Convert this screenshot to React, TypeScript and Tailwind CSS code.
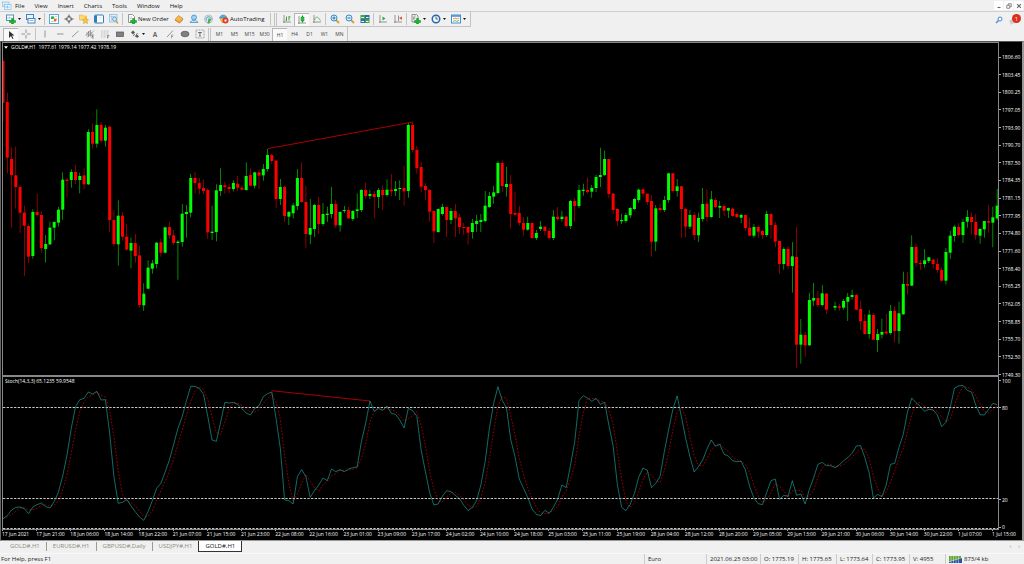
import type { ReactNode } from "react";
import clsx from "clsx";

// Chart space is drawn at 3 units per pixel
const BAR_STEP = 12.8;
const FIRST_BAR = 9;
const barX = (i: number) => FIRST_BAR + i * BAR_STEP;

// direction, high, body top, body bottom, low - one entry per hourly bar
const BAR_GROUPS = [
  {
    base: 150,
    bars: `d 25 33 158 215|d 128 156 323 370|d 293 327 375 533|d 290 376 411 476|d 405 411 488 548|d 467 488 527 678|d 520 528 620 638|u 478 486 618 626|d 431 486 495 500|d 484 495 594 608|u 555 582 597 638|u 515 533 583 585|u 514 516 533 571|u 471 479 518 530|u 367 389 479 509|d 384 389 393 443|u 358 366 390 413|d 345 366 390 403|u 368 378 390 430|d 354 376 403 418|u 238 246 403 405|d 221 246 281 296|u 178 225 281 293|d 216 225 272 278|u 225 233 272 290|d 228 230 510 545|d 480 510 582 590|u 451 497 583 647|d 486 497 560 572|d 522 560 599 602|u 562 579 602 655|d 552 579 618 638|d 588 616 765 773|u 700 731 766 783|u 631 653 716 718|u 630 640 656 671|u 576 578 642 655|d 566 577 608 620|u 530 532 608 610|d 515 531 556 567|d 540 556 579 586|u 570 575 579 689|u 462 491 576 590|u 465 486 492 563|u 372 384 488 502|d 366 384 399 430|d 384 399 416 433|d 388 414 423 432|d 415 420 547 567|u 467 545 549 570|u 403 421 546 574|u 355 405 423 438|d 395 406 411 431|d 403 411 417 430|u 391 399 417 424|d 378 401 413 423|d 405 413 419 421|u 337 378 420 422|d 355 375 407 410|u 366 367 407 415`,
  },
  {
    base: 300,
    bars: `d 208 217 227 267|u 192 207 226 242|u 147 165 207 215|d 162 165 183 192|d 180 182 297 325|u 237 261 297 315|d 258 261 348 365|u 333 336 350 375|u 309 316 340 355|u 207 234 318 330|d 187 234 306 308|d 258 306 402 443|u 297 384 404 432|u 312 315 387 411|d 291 315 372 402|u 309 342 372 378|u 320 341 345 366|u 261 312 342 355|d 300 312 376 384|u 333 336 376 395|u 318 330 333 339|d 321 330 355 358|u 330 333 357 363|u 280 328 333 354|u 267 270 330 336|d 248 270 288 296|u 270 282 288 297|d 273 282 291 355|u 264 270 291 324|d 256 270 285 330|u 238 269 285 290|d 222 269 274 288|u 243 267 273 288|u 241 264 267 300|d 197 264 274 317|u 69 75 273 293|d 67 75 150 158|d 138 150 204 221|d 187 201 260 276|d 249 258 270 300|d 267 270 335 365|d 333 333 394 429|u 325 327 396 398|u 312 321 342 347|d 320 321 360 411|u 324 333 360 372|d 312 333 355 411|d 342 352 381 402|d 369 381 384 404|d 380 381 398 434|u 357 369 396 416|u 345 363 372 395|u 342 360 366 396|u 273 317 363 367|u 276 288 321 324|u 258 277 290 311|u 183 189 279 282|d 181 189 258 276|u 201 252 261 290`,
  },
  {
    base: 360,
    bars: `d 165 192 282 325|d 215 279 284 286|d 258 279 309 317|d 291 309 329 347|u 290 309 329 332|d 307 309 354 357|u 330 339 354 360|u 303 320 327 333|d 318 320 333 346|d 324 333 354 359|u 270 290 354 360|d 261 290 297 303|u 273 290 297 305|d 288 290 318 324|u 240 243 318 327|d 234 243 258 305|u 195 210 258 264|u 191 209 213 227|d 172 210 216 221|u 195 204 215 233|u 164 171 204 216|u 83 165 171 201|u 92 117 165 168|d 117 117 222 234|d 219 221 270 282|d 265 267 303 318|u 281 300 304 312|u 278 285 303 309|u 261 264 286 294|u 234 237 267 270|u 206 209 240 248|d 207 208 221 231|d 221 221 246 255|d 225 243 365 410|u 255 265 365 393|d 251 264 270 278|u 228 240 270 276|u 158 160 240 248|d 159 160 213 218|u 177 199 213 230|d 198 199 267 354|d 262 267 320 351|u 270 285 320 327|d 276 285 345 360|u 278 294 346 366|u 204 252 297 305|d 209 251 291 305|u 213 238 291 293|d 234 240 261 264|u 243 258 263 294|d 252 258 272 288|u 263 264 272 294|d 262 266 288 291|d 277 282 291 294|u 281 285 293 309`,
  },
  {
    base: 510,
    bars: `d 134 135 174 182|d 142 173 197 199|u 162 171 197 203|d 165 171 185 203|d 180 183 195 207|u 122 132 195 200|d 130 132 165 207|d 156 165 215 231|d 213 213 282 311|u 232 237 282 299|d 228 237 288 297|u 216 259 288 368|d 171 261 524 593|u 447 494 524 581|d 486 495 526 560|u 369 390 526 527|u 339 384 392 408|d 363 384 405 412|u 345 370 405 409|d 369 371 419 432|-|u 395 408 413 422|d 402 409 413 422|u 387 393 413 419|u 369 381 395 453|u 359 375 381 389|d 372 375 419 421|d 393 417 454 479|d 432 453 492 494|u 420 434 492 506|d 429 435 509 511|u 477 492 510 546|u 446 486 494 505|d 432 485 490 495|u 405 423 489 494|d 409 423 483 518|u 395 430 483 521|u 305 342 433 434|d 305 342 347 374|u 196 231 347 348|d 221 231 279 290|d 270 279 282 300|u 237 271 282 293|u 261 262 273 279|d 267 269 282 296|d 265 282 300 309|d 292 300 332 334|u 234 246 332 344|u 183 197 248 267|u 166 170 198 215|d 159 171 195 200|u 146 156 195 219|u 120 141 155 173|d 128 141 156 194|d 132 156 195 209|u 174 177 197 221|u 153 153 178 203|d 105 153 158 188|u 110 142 158 232|u 57 107 145 150`,
  },
];

const CANDLES = BAR_GROUPS.flatMap(({ base, bars }) =>
  bars.split("|").map((bar) => {
    if (bar === "-") return null;
    const [dir, ...values] = bar.split(" ");
    const [high, top, bottom, low] = values.map((v) => Number(v) + base);
    return { up: dir === "u", high, top, bottom, low };
  })
);

const STOCH_MAIN = [
  446, 437, 420, 412, 411, 416, 431, 411, 404, 399, 410, 414, 395, 366, 318, 255, 175, 110, 89, 85,
  66, 72, 64, 90, 89, 190, 320, 400, 397, 388, 408, 425, 441, 451, 425, 392, 355, 340, 306, 270,
  223, 175, 140, 92, 49, 49, 55, 73, 140, 210, 214, 157, 97, 99, 97, 103, 116, 129, 135, 115,
  107, 80, 71, 66, 146, 235, 390, 392, 402, 320, 299, 320, 382, 362, 345, 324, 332, 297, 305, 299,
  305, 297, 293, 291, 215, 160, 93, 124, 115, 121, 108, 130, 133, 150, 174, 115, 122, 139, 240, 305,
  368, 405, 402, 378, 362, 365, 376, 386, 406, 422, 412, 392, 345, 275, 175, 100, 50, 91, 113, 209,
  260, 327, 355, 383, 417, 433, 437, 421, 430, 412, 387, 345, 353, 286, 215, 92, 77, 84, 94, 85,
  103, 97, 165, 228, 345, 412, 422, 403, 370, 322, 294, 301, 353, 340, 319, 245, 180, 118, 78, 140,
  205, 260, 306, 290, 270, 237, 210, 229, 223, 253, 258, 272, 275, 274, 300, 350, 384, 401, 404, 367,
  332, 327, 388, 376, 379, 332, 376, 372, 402, 358, 323, 283, 277, 287, 287, 293, 285, 272, 263, 250,
  228, 227, 263, 308, 384, 373, 380, 345, 283, 280, 232, 193, 125, 84, 98, 109, 124, 118, 120, 135,
  170, 157, 113, 54, 48, 46, 61, 66, 106, 134, 135, 118, 100, 104,
];

// Signal line is the 3 bar average of the main line
const STOCH_SIGNAL = STOCH_MAIN.map((_, i) => {
  const slice = STOCH_MAIN.slice(Math.max(0, i - 2), i + 1);
  return slice.reduce((sum, v) => sum + v, 0) / slice.length;
});

const toPoints = (values: number[]) => values.map((v, i) => `${barX(i)},${v}`).join(" ");

const PRICES = [
  "1806.60", "1803.45", "1800.25", "1797.05", "1793.90", "1790.70", "1787.50", "1784.35", "1781.15", "1777.95",
  "1774.80", "1771.60", "1768.40", "1765.25", "1762.05", "1758.85", "1755.70", "1752.50", "1749.30",
];

const TIMES = [
  "17 Jun 2021", "17 Jun 21:00", "18 Jun 06:00", "18 Jun 14:00", "18 Jun 22:00", "21 Jun 07:00",
  "21 Jun 15:00", "21 Jun 23:00", "22 Jun 08:00", "22 Jun 16:00", "23 Jun 01:00", "23 Jun 09:00",
  "23 Jun 17:00", "24 Jun 02:00", "24 Jun 10:00", "24 Jun 18:00", "25 Jun 03:00", "25 Jun 11:00",
  "25 Jun 19:00", "28 Jun 04:00", "28 Jun 12:00", "28 Jun 20:00", "29 Jun 05:00", "29 Jun 13:00",
  "29 Jun 21:00", "30 Jun 06:00", "30 Jun 14:00", "30 Jun 22:00", "1 Jul 07:00",
];

const MENUS = ["File", "View", "Insert", "Charts", "Tools", "Window", "Help"];
const TIMEFRAMES = ["M1", "M5", "M15", "M30", "H1", "H4", "D1", "W1", "MN"];
const TABS = ["GOLD#,H1", "EURUSD#,H1", "GBPUSD#,Daily", "USDJPY#,H1"];

function Icon({ children }: { children: ReactNode }) {
  return (
    <svg viewBox="0 0 20 20" className="h-[10px] w-[10px] shrink-0" fill="none" aria-hidden="true">
      {children}
    </svg>
  );
}

interface ToolButtonProps {
  label: string;
  active?: boolean;
  dropdown?: boolean;
  children: ReactNode;
}

function ToolButton({ label, active, dropdown, children }: ToolButtonProps) {
  return (
    <button
      aria-label={label}
      className={clsx(
        "flex h-[13px] shrink-0 items-center justify-center",
        dropdown ? "w-[20px] gap-[2px]" : "w-[15px]",
        active && "border-l border-t border-[#b5b5b5] bg-[#f9f9f9]"
      )}
    >
      {children}
      {dropdown && (
        <svg viewBox="0 0 6 4" className="h-[2px] w-[3px] shrink-0" aria-hidden="true">
          <path d="M0 0h6L3 4z" fill="#111" />
        </svg>
      )}
    </button>
  );
}

const Divider = () => <span className="mx-[1px] h-[12px] w-px shrink-0 bg-[#c3c3c3]" />;

const GreenPlus = () => <path d="M11 9h4v4h4v4h-4v3h-4v-3H7v-4h4z" fill="#19b52b" stroke="#0b8a19" />;

function MenuBar() {
  return (
    <header className="flex h-[12px] items-center border-b border-[#cfcfcf] text-[6px] leading-[10px] text-[#111]">
      <span className="mx-[2px]">
        <Icon>
          <rect x="1" y="2" width="13" height="9" fill="#d9efff" stroke="#58a8dc" />
          <rect x="5" y="7" width="13" height="10" fill="#eef8ff" stroke="#58a8dc" />
          <path d="M8 14v-4m3 5V9m3 5v-3" stroke="#3c8ec8" />
        </Icon>
      </span>
      <nav className="flex gap-[10px] pl-px">
        {MENUS.map((menu) => (
          <button key={menu}>{menu}</button>
        ))}
      </nav>
      <div className="ml-auto flex gap-[1px] pr-px">
        {["Minimize", "Restore", "Close"].map((name) => (
          <button key={name} aria-label={name} className="flex h-[9px] w-[9px] items-center justify-center bg-white">
            <svg viewBox="0 0 8 8" className="h-[6px] w-[6px]" fill="none" stroke="#666" aria-hidden="true">
              {name === "Minimize" && <path d="M2 6h4" strokeWidth="1.5" />}
              {name === "Restore" && <path d="M1 3h4v4H1zM3 3V1h4v4H5" />}
              {name === "Close" && <path d="M1.5 1.5l5 5m0-5l-5 5" strokeWidth="1.5" />}
            </svg>
          </button>
        ))}
      </div>
    </header>
  );
}

function MainToolbar() {
  return (
    <div className="flex h-[15px] items-center">
      <div className="flex h-[15px] items-center border-b border-r border-[#c3c3c3] pl-[3px] pr-[2px]">
        <ToolButton label="New chart" dropdown>
          <Icon>
            <rect x="1" y="2" width="14" height="11" fill="#fff" stroke="#4e94bd" strokeWidth="2" />
            <path d="M4 10V6m3 4V5m3 4V6" stroke="#4e94bd" />
            <GreenPlus />
          </Icon>
        </ToolButton>
        <ToolButton label="Profiles" dropdown>
          <Icon>
            <rect x="1" y="1" width="14" height="10" fill="#e7f3fb" stroke="#3f88c5" strokeWidth="2" />
            <rect x="4" y="9" width="14" height="9" fill="#fff" stroke="#3f88c5" strokeWidth="2" />
            <path d="M7 13h8" stroke="#8bb9dd" strokeWidth="2" />
          </Icon>
        </ToolButton>
        <Divider />
        <ToolButton label="Market Watch">
          <Icon>
            <rect x="1" y="1" width="18" height="18" fill="#fff" stroke="#62a6d2" strokeWidth="2" />
            <path d="M4 9l4-5 4 5z" fill="#28b03c" />
            <path d="M4 5h5v5H4z" fill="#28b03c" />
            <path d="M10 10l6-1-2 6h-5z" fill="#f0632f" />
            <path d="M12 5h4M4 15h4" stroke="#b9d3e4" strokeWidth="2" />
          </Icon>
        </ToolButton>
        <ToolButton label="Data Window">
          <Icon>
            <circle cx="10" cy="10" r="5" stroke="#555" strokeWidth="1.5" />
            <path d="M10 1v7m0 4v7M1 10h7m4 0h7" stroke="#555" strokeWidth="2" />
          </Icon>
        </ToolButton>
        <ToolButton label="Navigator">
          <Icon>
            <path d="M1 2h6l2 2h6v8H1z" fill="#ffda70" stroke="#d8a02d" />
            <path d="M13 7l2 4 4 .5-3 3 1 4.5-4-2-4 2 1-4.5-3-3 4-.5z" fill="#ffc93c" stroke="#c98c1b" />
          </Icon>
        </ToolButton>
        <ToolButton label="Terminal">
          <Icon>
            <rect x="1" y="2" width="18" height="16" rx="2" fill="#fff" stroke="#2f7dbb" strokeWidth="2" />
            <path d="M2 3h4v14H2z" fill="#2f7dbb" />
            <path d="M9 7h7m-7 3h7" stroke="#c7dff0" />
          </Icon>
        </ToolButton>
        <ToolButton label="Strategy Tester">
          <Icon>
            <rect x="1" y="1" width="15" height="15" fill="#e4f1fa" stroke="#87b7d6" strokeWidth="1.5" />
            <path d="M3 5h10M5 3v11" stroke="#87b7d6" />
            <circle cx="11" cy="10" r="4" fill="#cfe9fb" stroke="#4a8ebb" strokeWidth="1.5" />
            <path d="M14 14l4 5" stroke="#dba436" strokeWidth="3" />
          </Icon>
        </ToolButton>
        <Divider />
        <button className="flex h-[13px] w-[47px] items-center gap-[1px] pl-[3px] text-[6px] text-[#111]">
          <Icon>
            <path d="M3 1h8l4 4v12H3z" fill="#fff" stroke="#777" strokeWidth="1.5" />
            <path d="M5 6h5M5 9h5" stroke="#999" />
            <GreenPlus />
          </Icon>
          <span className="whitespace-nowrap">New Order</span>
        </button>
        <ToolButton label="MetaEditor">
          <Icon>
            <path d="M2 11l7-8 9 6-7 8z" fill="#f5b64b" stroke="#b76b16" />
            <path d="M2 11l9 6 7-8v3l-7 7-9-6z" fill="#cb7d22" />
          </Icon>
        </ToolButton>
        <ToolButton label="Market">
          <Icon>
            <circle cx="10" cy="7" r="5" fill="#9fd0f2" stroke="#3f8bc4" strokeWidth="1.5" />
            <path d="M2 17c0-5 16-5 16 0z" fill="#d7ebf9" stroke="#3f8bc4" strokeWidth="1.5" />
          </Icon>
        </ToolButton>
        <ToolButton label="Signals">
          <Icon>
            <circle cx="9" cy="10" r="8" fill="#e1e8ec" stroke="#a3b1ba" strokeWidth="1.5" />
            <path d="M5 13a5 5 0 119-1" stroke="#5198c6" strokeWidth="2" />
            <path d="M9 8l5 3-3 8H7z" fill="#44b34c" />
          </Icon>
        </ToolButton>
        <button className="flex h-[13px] w-[53px] items-center gap-[1px] pl-[3px] text-[6px] text-[#111]">
          <Icon>
            <path d="M1 8c2-8 13-8 15 0z" fill="#5fa9d8" stroke="#2f74a5" />
            <path d="M2 9h13l-3 8H6z" fill="#f3c34d" stroke="#bb8220" />
            <circle cx="13" cy="13" r="6" fill="#e03a22" />
            <path d="M11 11h4v4h-4z" fill="#fff" />
          </Icon>
          <span className="whitespace-nowrap">AutoTrading</span>
        </button>
        <Divider />
        <span className="mx-[2px] h-[13px] w-[3px] border-x border-[#c3c3c3]" />
        <ToolButton label="Bar chart">
          <Icon>
            <path d="M4 2v16M2 16h16" stroke="#777" strokeWidth="1.5" />
            <path d="M9 5v9M7 12h2m5-8v9m0-7h3" stroke="#43a04a" strokeWidth="2" />
          </Icon>
        </ToolButton>
        <ToolButton label="Candlesticks" active>
          <Icon>
            <path d="M4 2v16M2 16h16" stroke="#777" strokeWidth="1.5" />
            <path d="M11 1v14" stroke="#118b25" strokeWidth="2" />
            <path d="M8 4h6v8H8z" fill="#20c638" stroke="#118b25" />
          </Icon>
        </ToolButton>
        <ToolButton label="Line chart">
          <Icon>
            <path d="M4 2v16M2 16h16" stroke="#777" strokeWidth="1.5" />
            <path d="M5 12c3-8 6-8 12 1" stroke="#43a04a" strokeWidth="1.5" />
          </Icon>
        </ToolButton>
        <Divider />
        {["Zoom in", "Zoom out"].map((name) => (
          <ToolButton key={name} label={name}>
            <Icon>
              <path d="M12 12l6 6" stroke="#d9a134" strokeWidth="4" />
              <circle cx="8" cy="8" r="6" fill="#d9effc" stroke="#348bc9" strokeWidth="2" />
              <path d="M5 8h6" stroke="#246fa8" strokeWidth="2" />
              {name === "Zoom in" && <path d="M8 5v6" stroke="#246fa8" strokeWidth="2" />}
            </Icon>
          </ToolButton>
        ))}
        <ToolButton label="Tile windows">
          <Icon>
            <path d="M1 2h9v8H1zM10 10h9v8h-9z" fill="#43a536" />
            <path d="M10 2h9v8h-9zM1 10h9v8H1z" fill="#276fbd" />
            <path d="M3 6h5v2H3zm9 0h5v2h-5zM3 14h5v2H3zm9 0h5v2h-5z" fill="#fff" />
          </Icon>
        </ToolButton>
        <Divider />
        <ToolButton label="Auto scroll">
          <Icon>
            <path d="M4 2v16M2 16h16" stroke="#777" strokeWidth="1.5" />
            <path d="M9 5l6 4-6 4z" fill="#2daa3e" />
          </Icon>
        </ToolButton>
        <ToolButton label="Chart shift">
          <Icon>
            <path d="M4 2v16M2 16h16M11 3v11" stroke="#777" strokeWidth="1.5" />
            <path d="M18 5v7l-6-4z" fill="#d65a35" />
          </Icon>
        </ToolButton>
        <Divider />
        <ToolButton label="Indicators" dropdown>
          <Icon>
            <path d="M2 1h9l3 3v12H2z" fill="#eee" stroke="#777" strokeWidth="1.5" />
            <path d="M5 12c1-9 2-9 4-8M4 8h5" stroke="#555" />
            <GreenPlus />
          </Icon>
        </ToolButton>
        <ToolButton label="Periods" dropdown>
          <Icon>
            <circle cx="10" cy="10" r="7.5" fill="#eef7fd" stroke="#2469ac" strokeWidth="3" />
            <path d="M10 5v5h4" stroke="#333" strokeWidth="1.5" />
          </Icon>
        </ToolButton>
        <ToolButton label="Templates" dropdown>
          <Icon>
            <rect x="1" y="2" width="18" height="16" fill="#fff" stroke="#4390c8" strokeWidth="2" />
            <path d="M1 4h18" stroke="#4390c8" strokeWidth="3" />
            <path d="M4 10l4-2 4 2 4-2" stroke="#d86a35" strokeWidth="1.5" />
            <path d="M4 15l4-2 4 2 4-3" stroke="#3da44d" strokeWidth="1.5" />
          </Icon>
        </ToolButton>
      </div>
      <div className="ml-auto flex items-center gap-[6px] pr-[3px]">
        <button aria-label="Search">
          <svg viewBox="0 0 16 16" className="h-[8px] w-[8px]" fill="none" aria-hidden="true">
            <path d="M2 14l5-5" stroke="#4a8fd0" strokeWidth="3" />
            <circle cx="10" cy="6" r="4" fill="#fff" stroke="#3f87cc" strokeWidth="2" />
          </svg>
        </button>
        <button aria-label="Notifications" className="flex items-end">
          <svg viewBox="0 0 24 22" className="h-[11px] w-[12px]" aria-hidden="true">
            <path d="M1 14c0-4 12-5 14 0 1 4-4 5-8 5l-4 3v-4c-2-1-2-2-2-4z" fill="#ccc" />
            <circle cx="15" cy="9" r="9" fill="#dd2e1a" />
            <text x="15" y="13" textAnchor="middle" fontSize="12" fill="#fff">1</text>
          </svg>
        </button>
      </div>
    </div>
  );
}

function DrawingToolbar() {
  return (
    <div className="flex h-[14px]">
      <div className="flex h-[14px] items-center border-r border-[#c3c3c3] pl-[3px]">
        <ToolButton label="Cursor" active>
          <Icon>
            <path d="M6 2v14l4-4 3 6 2-1-3-6h5z" fill="#333" />
          </Icon>
        </ToolButton>
        <ToolButton label="Crosshair">
          <Icon>
            <path d="M10 1v7m0 4v7M1 10h7m4 0h7" stroke="#777" strokeWidth="1.5" />
          </Icon>
        </ToolButton>
        <span className="ml-[2px] mr-[1px] h-[12px] w-px bg-[#c3c3c3]" />
        <ToolButton label="Vertical line">
          <Icon><path d="M10 3v14" stroke="#777" strokeWidth="1.5" /></Icon>
        </ToolButton>
        <ToolButton label="Horizontal line">
          <Icon><path d="M4 10h13" stroke="#777" strokeWidth="1.5" /></Icon>
        </ToolButton>
        <ToolButton label="Trendline">
          <Icon><path d="M4 16L17 4" stroke="#777" strokeWidth="1.5" /></Icon>
        </ToolButton>
        <ToolButton label="Equidistant channel">
          <Icon>
            <path d="M1 13L12 2M4 17L18 3M2 8h13M2 12h13M7 4v12m4-13v12" stroke="#666" />
            <path d="M18 12h-4v6h4m-4-3h3" stroke="#444" />
          </Icon>
        </ToolButton>
        <ToolButton label="Fibonacci retracement">
          <Icon>
            <path d="M2 4h16M2 8h16M2 12h16M2 16h10" stroke="#888" strokeDasharray="2 1" />
            <path d="M15 19v-6h4m-4 3h3" stroke="#444" />
          </Icon>
        </ToolButton>
        <ToolButton label="Rectangle">
          <Icon><rect x="3" y="6" width="14" height="9" fill="#808080" stroke="#5a5a5a" strokeWidth="1.5" /></Icon>
        </ToolButton>
        <ToolButton label="Arrows" dropdown>
          <Icon>
            <path d="M2 7l4-4 4 4-4 4zM11 14l3-3 4 4-4 3z" fill="#555" />
            <path d="M6 14l4-4m0 6l5-8" stroke="#555" strokeWidth="1.5" />
          </Icon>
        </ToolButton>
        <ToolButton label="Text">
          <Icon>
            <text x="10" y="15" textAnchor="middle" fontSize="13" fontWeight="bold" fill="#666">A</text>
          </Icon>
        </ToolButton>
        <ToolButton label="Text line">
          <Icon>
            <path d="M4 16L16 3" stroke="#777" strokeWidth="1.5" />
            <path d="M13 19v-7h4m-4 3h3" stroke="#666" />
          </Icon>
        </ToolButton>
        <ToolButton label="Ellipse">
          <Icon><ellipse cx="10" cy="10" rx="8" ry="5.5" fill="#808080" stroke="#5a5a5a" strokeWidth="1.5" /></Icon>
        </ToolButton>
        <ToolButton label="Text label">
          <Icon>
            <rect x="2" y="2" width="16" height="16" stroke="#888" strokeDasharray="2 1" strokeWidth="1.5" />
            <text x="10" y="15" textAnchor="middle" fontSize="13" fontWeight="bold" fill="#666">T</text>
          </Icon>
        </ToolButton>
        <span className="mx-[1px] h-[13px] w-[3px] border-x border-[#c3c3c3]" />
        <div className="flex text-[5px] leading-[10px] text-[#444]">
          {TIMEFRAMES.map((tf) => (
            <ToolButton key={tf} label={tf} active={tf === "H1"}>
              {tf}
            </ToolButton>
          ))}
        </div>
      </div>
    </div>
  );
}

function PriceChart() {
  return (
    <svg viewBox="9 129 2985 996" preserveAspectRatio="none" className="block h-full w-full" role="img" aria-label="GOLD#,H1">
      {CANDLES.map((c, i) =>
        c ? (
          <g key={i} fill={c.up ? "#00ff00" : "#ff0000"}>
            <rect x={barX(i) - 0.8} y={c.high} width={1.6} height={c.low - c.high} />
            <rect x={barX(i) - 4.5} y={c.top} width={9} height={Math.max(3, c.bottom - c.top)} />
          </g>
        ) : null
      )}
      <path d="M803 446L1238 366" stroke="#ff0000" strokeWidth="2" />
    </svg>
  );
}

function StochChart() {
  return (
    <svg viewBox="9 21 2985 456" preserveAspectRatio="none" className="block h-full w-full" fill="none" role="img" aria-label="Stochastic">
      <path d="M9 112.5H2994M9 385.5H2994M9 475.5H2994" stroke="#c8c8c8" strokeWidth="3" strokeDasharray="7 4" />
      <polyline points={toPoints(STOCH_SIGNAL)} stroke="#ff0000" strokeWidth="1.8" strokeDasharray="5 5" />
      <polyline points={toPoints(STOCH_MAIN)} stroke="#20b2aa" strokeWidth="1.8" />
      <path d="M814 62L1110 93" stroke="#ff0000" strokeWidth="2" />
    </svg>
  );
}

function AxisLabel({ children }: { children: ReactNode }) {
  return (
    <div className="flex h-[6px] shrink-0 items-center gap-[1px]">
      <span className="h-px w-[2px] bg-[#aaa]" />
      {children}
    </div>
  );
}

function ChartWindow() {
  return (
    <main className="flex min-h-0 flex-1 flex-col border-b border-l border-r-2 border-t border-b-[#999] border-l-[#666] border-r-[#999] border-t-[#555] bg-black pl-px text-[5px] leading-[6px] text-white">
      <div className="flex min-h-0 flex-1">
        <div className="flex min-w-0 flex-1 flex-col border border-[#888]">
          <section className="relative min-h-0 flex-[332]">
            <PriceChart />
            <div className="absolute left-[1px] top-[1px] flex items-center gap-[3px] whitespace-pre">
              <svg viewBox="0 0 8 5" className="h-[3px] w-[4px]" aria-hidden="true">
                <path d="M0 0h8L4 5z" fill="#fff" />
              </svg>
              {"GOLD#,H1  1977.61 1979.14 1977.42 1978.19"}
            </div>
          </section>
          <div className="h-[2px] shrink-0 bg-[#888]" />
          <section className="relative min-h-0 flex-[152]">
            <StochChart />
            <div className="absolute left-[2px] top-[1px] whitespace-nowrap">Stoch(14,3,3) 65.1235 59.9548</div>
          </section>
        </div>
        <div className="flex w-[23px] shrink-0 flex-col pt-[12px]">
          <div className="flex min-h-0 flex-[323] flex-col justify-between">
            {PRICES.map((price) => (
              <AxisLabel key={price}>{price}</AxisLabel>
            ))}
          </div>
          <div className="flex min-h-0 flex-[152] flex-col">
            <AxisLabel>100</AxisLabel>
            <span className="flex-[21]" />
            <AxisLabel>80</AxisLabel>
            <span className="flex-[85]" />
            <AxisLabel>20</AxisLabel>
            <span className="flex-[21]" />
            <AxisLabel>0</AxisLabel>
          </div>
        </div>
      </div>
      <div className="flex h-[10px] shrink-0">
        {TIMES.map((time) => (
          <div key={time} className="min-w-0 flex-1 whitespace-nowrap">
            <div className="h-px w-px bg-[#aaa]" />
            {time}
          </div>
        ))}
        <div className="w-[30px] shrink-0 whitespace-nowrap">
          <div className="h-px w-px bg-[#aaa]" />
          1 Jul 15:00
        </div>
      </div>
    </main>
  );
}

function ChartTabs() {
  return (
    <div className="flex h-[12px] items-start text-[6px] leading-[10px] text-[#8b8b80]">
      {TABS.map((tab) => (
        <button key={tab} className="mt-px h-[9px] border-r border-[#999] px-[6px] leading-[9px] first:pl-[10px] last-of-type:border-r-0">
          {tab}
        </button>
      ))}
      <div className="h-[11px] border-x border-b border-[#333] bg-white px-[6px] text-[#111]">
        <button>GOLD#,H1</button>
      </div>
      <div className="ml-auto flex gap-[7px] pr-[4px]">
        <button aria-label="Scroll left">‹</button>
        <button aria-label="Scroll right">›</button>
      </div>
    </div>
  );
}

function StatusCell({ className, children }: { className: string; children: ReactNode }) {
  return (
    <div className={clsx("flex h-[10px] shrink-0 items-center gap-[2px] whitespace-nowrap border-l border-[#ccc] pl-[3px]", className)}>
      {children}
    </div>
  );
}

function StatusBar() {
  return (
    <footer className="flex h-[11px] items-center border-t border-[#f8f8f8] text-[6px] leading-[10px] text-[#222]">
      <span className="flex-1 pl-px">For Help, press F1</span>
      <StatusCell className="w-[62px]">Euro</StatusCell>
      <StatusCell className="w-[54px]">2021.06.25 03:00</StatusCell>
      <StatusCell className="w-[38px]">O: 1775.19</StatusCell>
      <StatusCell className="w-[38px]">H: 1775.65</StatusCell>
      <StatusCell className="w-[36px]">L: 1773.64</StatusCell>
      <StatusCell className="w-[37px]">C: 1773.95</StatusCell>
      <StatusCell className="w-[36px]">V: 4955</StatusCell>
      <StatusCell className="w-[79px]">
        <svg viewBox="0 0 26 14" className="h-[7px] w-[13px]" aria-hidden="true">
          <path d="M0 0h24v4L0 11z" fill="#5fa82d" />
          <path d="M0 14v-2l26-8v10z" fill="#2b50a8" />
          <path d="M4 0v14M9 0v14M14 0v14M19 0v14" stroke="#e8eef4" />
        </svg>
        873/4 kb
      </StatusCell>
    </footer>
  );
}

export default function App() {
  return (
    <div className="flex h-screen flex-col overflow-hidden bg-[#f0f0f0] font-['Open_Sans','Noto_Sans',sans-serif]">
      <MenuBar />
      <MainToolbar />
      <DrawingToolbar />
      <ChartWindow />
      <ChartTabs />
      <StatusBar />
    </div>
  );
}
